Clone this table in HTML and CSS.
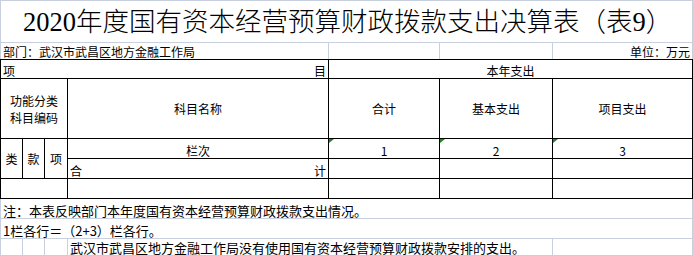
FILE: index.html
```html
<!DOCTYPE html>
<html lang="zh-CN">
<head>
<meta charset="utf-8">
<title>2020年度国有资本经营预算财政拨款支出决算表（表9）</title>
<link rel="stylesheet" href="styles.css">
</head>
<body>
<table class="sheet">
  <colgroup>
    <col class="c1"><col class="c2"><col class="c3"><col class="c4"><col class="c5"><col class="c6"><col class="c7">
  </colgroup>
  <tr class="r-title">
    <td colspan="7" class="title">2020年度国有资本经营预算财政拨款支出决算表（表9）</td>
  </tr>
  <tr class="r-dept">
    <td colspan="4">部门：武汉市武昌区地方金融工作局</td>
    <td></td>
    <td></td>
    <td class="right">单位：万元</td>
  </tr>
  <tr class="r-item">
    <td colspan="4" class="b"><div class="split"><span>项</span><span>目</span></div></td>
    <td colspan="3" class="b center">本年支出</td>
  </tr>
  <tr class="r-head">
    <td colspan="3" class="b mid center two">功能分类<br>科目编码</td>
    <td class="b mid center">科目名称</td>
    <td class="b mid center">合计</td>
    <td class="b mid center">基本支出</td>
    <td class="b mid center">项目支出</td>
  </tr>
  <tr class="r-row">
    <td rowspan="2" class="b mid center">类</td>
    <td rowspan="2" class="b mid center">款</td>
    <td rowspan="2" class="b mid center">项</td>
    <td class="b center">栏次</td>
    <td class="b center mark">1</td>
    <td class="b center mark">2</td>
    <td class="b center mark">3</td>
  </tr>
  <tr class="r-row">
    <td class="b"><div class="split"><span>合</span><span>计</span></div></td>
    <td class="b"></td>
    <td class="b"></td>
    <td class="b"></td>
  </tr>
  <tr class="r-row">
    <td colspan="3" class="b"></td>
    <td class="b"></td>
    <td class="b"></td>
    <td class="b"></td>
    <td class="b"></td>
  </tr>
  <tr class="r-row r-note">
    <td colspan="7" class="note">注：本表反映部门本年度国有资本经营预算财政拨款支出情况。</td>
  </tr>
  <tr class="r-row r-note">
    <td colspan="7" class="note">1栏各行＝（2+3）栏各行。</td>
  </tr>
  <tr class="r-last r-note">
    <td></td>
    <td></td>
    <td></td>
    <td colspan="3" class="note">武汉市武昌区地方金融工作局没有使用国有资本经营预算财政拨款安排的支出。</td>
    <td></td>
  </tr>
</table>
</body>
</html>
```

FILE: styles.css
```css
body {
  margin: 0;
  background: #fff;
  color: #000;
  font-family: "Noto Sans CJK SC", sans-serif;
  font-size: 12px;
}

.sheet {
  border-collapse: collapse;
  table-layout: fixed;
  width: 692px;
}

.c1 { width: 22px; }
.c2 { width: 22px; }
.c3 { width: 23px; }
.c4 { width: 261px; }
.c5 { width: 111px; }
.c6 { width: 113px; }
.c7 { width: 140px; }

td {
  padding: 0 2px;
  line-height: 14px;
  white-space: nowrap;
  vertical-align: bottom;
  border: 1px solid #c8d0e0;
}

.r-title { height: 42px; }
.r-dept { height: 17px; }
.r-item { height: 19px; }
.r-head { height: 60px; }
.r-row { height: 20px; }
.r-last { height: 17px; }

.title {
  font-family: "Liberation Serif", "Noto Sans CJK SC", serif;
  font-size: 26.5px;
  font-weight: 300;
  line-height: 30px;
  text-align: center;
  vertical-align: middle;
  padding: 0 0 0 2px;
}

.r-dept td { border-bottom-color: #000; }

.right { text-align: right; }
.center { text-align: center; }
.mid { vertical-align: middle; }
.two { line-height: 17px; }

td.b { border: 1px solid #000; }

.split {
  display: flex;
  justify-content: space-between;
}

.mark { position: relative; }
.mark::before {
  content: "";
  position: absolute;
  left: 0;
  top: 0;
  border-top: 4px solid #1a8a1a;
  border-right: 5px solid transparent;
}

.r-note td { border-top-style: none; }
.note {
  font-size: 13px;
  padding-left: 2px;
}
```
